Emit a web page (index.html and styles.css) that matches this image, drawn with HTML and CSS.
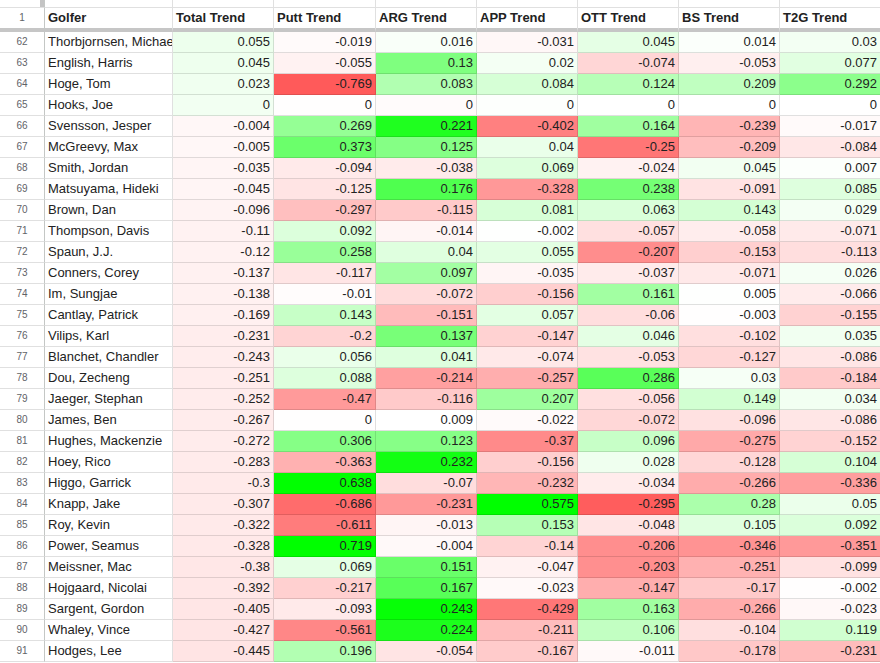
FILE: index.html
```html
<!DOCTYPE html>
<html>
<head>
<meta charset="utf-8">
<title>Golfer Trends</title>
<link rel="stylesheet" href="styles.css">
<script src="script.js" defer></script>
</head>
<body>
<div class="sheet">
  <div class="row top">
    <div class="cell rn"><div class="handle"></div></div>
    <div class="cell"></div><div class="cell"></div><div class="cell"></div><div class="cell"></div>
    <div class="cell"></div><div class="cell"></div><div class="cell"></div><div class="cell"></div>
  </div>
  <div class="row head">
    <div class="cell rn">1</div>
    <div class="cell">Golfer</div>
    <div class="cell">Total Trend</div>
    <div class="cell">Putt Trend</div>
    <div class="cell">ARG Trend</div>
    <div class="cell">APP Trend</div>
    <div class="cell">OTT Trend</div>
    <div class="cell">BS Trend</div>
    <div class="cell">T2G Trend</div>
  </div>
  <div class="row data"><div class="cell rn">62</div><div class="cell">Thorbjornsen, Michael</div><div class="cell num">0.055</div><div class="cell num">-0.019</div><div class="cell num">0.016</div><div class="cell num">-0.031</div><div class="cell num">0.045</div><div class="cell num">0.014</div><div class="cell num">0.03</div></div>
  <div class="row data"><div class="cell rn">63</div><div class="cell">English, Harris</div><div class="cell num">0.045</div><div class="cell num">-0.055</div><div class="cell num">0.13</div><div class="cell num">0.02</div><div class="cell num">-0.074</div><div class="cell num">-0.053</div><div class="cell num">0.077</div></div>
  <div class="row data"><div class="cell rn">64</div><div class="cell">Hoge, Tom</div><div class="cell num">0.023</div><div class="cell num">-0.769</div><div class="cell num">0.083</div><div class="cell num">0.084</div><div class="cell num">0.124</div><div class="cell num">0.209</div><div class="cell num">0.292</div></div>
  <div class="row data"><div class="cell rn">65</div><div class="cell">Hooks, Joe</div><div class="cell num">0</div><div class="cell num">0</div><div class="cell num">0</div><div class="cell num">0</div><div class="cell num">0</div><div class="cell num">0</div><div class="cell num">0</div></div>
  <div class="row data"><div class="cell rn">66</div><div class="cell">Svensson, Jesper</div><div class="cell num">-0.004</div><div class="cell num">0.269</div><div class="cell num">0.221</div><div class="cell num">-0.402</div><div class="cell num">0.164</div><div class="cell num">-0.239</div><div class="cell num">-0.017</div></div>
  <div class="row data"><div class="cell rn">67</div><div class="cell">McGreevy, Max</div><div class="cell num">-0.005</div><div class="cell num">0.373</div><div class="cell num">0.125</div><div class="cell num">0.04</div><div class="cell num">-0.25</div><div class="cell num">-0.209</div><div class="cell num">-0.084</div></div>
  <div class="row data"><div class="cell rn">68</div><div class="cell">Smith, Jordan</div><div class="cell num">-0.035</div><div class="cell num">-0.094</div><div class="cell num">-0.038</div><div class="cell num">0.069</div><div class="cell num">-0.024</div><div class="cell num">0.045</div><div class="cell num">0.007</div></div>
  <div class="row data"><div class="cell rn">69</div><div class="cell">Matsuyama, Hideki</div><div class="cell num">-0.045</div><div class="cell num">-0.125</div><div class="cell num">0.176</div><div class="cell num">-0.328</div><div class="cell num">0.238</div><div class="cell num">-0.091</div><div class="cell num">0.085</div></div>
  <div class="row data"><div class="cell rn">70</div><div class="cell">Brown, Dan</div><div class="cell num">-0.096</div><div class="cell num">-0.297</div><div class="cell num">-0.115</div><div class="cell num">0.081</div><div class="cell num">0.063</div><div class="cell num">0.143</div><div class="cell num">0.029</div></div>
  <div class="row data"><div class="cell rn">71</div><div class="cell">Thompson, Davis</div><div class="cell num">-0.11</div><div class="cell num">0.092</div><div class="cell num">-0.014</div><div class="cell num">-0.002</div><div class="cell num">-0.057</div><div class="cell num">-0.058</div><div class="cell num">-0.071</div></div>
  <div class="row data"><div class="cell rn">72</div><div class="cell">Spaun, J.J.</div><div class="cell num">-0.12</div><div class="cell num">0.258</div><div class="cell num">0.04</div><div class="cell num">0.055</div><div class="cell num">-0.207</div><div class="cell num">-0.153</div><div class="cell num">-0.113</div></div>
  <div class="row data"><div class="cell rn">73</div><div class="cell">Conners, Corey</div><div class="cell num">-0.137</div><div class="cell num">-0.117</div><div class="cell num">0.097</div><div class="cell num">-0.035</div><div class="cell num">-0.037</div><div class="cell num">-0.071</div><div class="cell num">0.026</div></div>
  <div class="row data"><div class="cell rn">74</div><div class="cell">Im, Sungjae</div><div class="cell num">-0.138</div><div class="cell num">-0.01</div><div class="cell num">-0.072</div><div class="cell num">-0.156</div><div class="cell num">0.161</div><div class="cell num">0.005</div><div class="cell num">-0.066</div></div>
  <div class="row data"><div class="cell rn">75</div><div class="cell">Cantlay, Patrick</div><div class="cell num">-0.169</div><div class="cell num">0.143</div><div class="cell num">-0.151</div><div class="cell num">0.057</div><div class="cell num">-0.06</div><div class="cell num">-0.003</div><div class="cell num">-0.155</div></div>
  <div class="row data"><div class="cell rn">76</div><div class="cell">Vilips, Karl</div><div class="cell num">-0.231</div><div class="cell num">-0.2</div><div class="cell num">0.137</div><div class="cell num">-0.147</div><div class="cell num">0.046</div><div class="cell num">-0.102</div><div class="cell num">0.035</div></div>
  <div class="row data"><div class="cell rn">77</div><div class="cell">Blanchet, Chandler</div><div class="cell num">-0.243</div><div class="cell num">0.056</div><div class="cell num">0.041</div><div class="cell num">-0.074</div><div class="cell num">-0.053</div><div class="cell num">-0.127</div><div class="cell num">-0.086</div></div>
  <div class="row data"><div class="cell rn">78</div><div class="cell">Dou, Zecheng</div><div class="cell num">-0.251</div><div class="cell num">0.088</div><div class="cell num">-0.214</div><div class="cell num">-0.257</div><div class="cell num">0.286</div><div class="cell num">0.03</div><div class="cell num">-0.184</div></div>
  <div class="row data"><div class="cell rn">79</div><div class="cell">Jaeger, Stephan</div><div class="cell num">-0.252</div><div class="cell num">-0.47</div><div class="cell num">-0.116</div><div class="cell num">0.207</div><div class="cell num">-0.056</div><div class="cell num">0.149</div><div class="cell num">0.034</div></div>
  <div class="row data"><div class="cell rn">80</div><div class="cell">James, Ben</div><div class="cell num">-0.267</div><div class="cell num">0</div><div class="cell num">0.009</div><div class="cell num">-0.022</div><div class="cell num">-0.072</div><div class="cell num">-0.096</div><div class="cell num">-0.086</div></div>
  <div class="row data"><div class="cell rn">81</div><div class="cell">Hughes, Mackenzie</div><div class="cell num">-0.272</div><div class="cell num">0.306</div><div class="cell num">0.123</div><div class="cell num">-0.37</div><div class="cell num">0.096</div><div class="cell num">-0.275</div><div class="cell num">-0.152</div></div>
  <div class="row data"><div class="cell rn">82</div><div class="cell">Hoey, Rico</div><div class="cell num">-0.283</div><div class="cell num">-0.363</div><div class="cell num">0.232</div><div class="cell num">-0.156</div><div class="cell num">0.028</div><div class="cell num">-0.128</div><div class="cell num">0.104</div></div>
  <div class="row data"><div class="cell rn">83</div><div class="cell">Higgo, Garrick</div><div class="cell num">-0.3</div><div class="cell num">0.638</div><div class="cell num">-0.07</div><div class="cell num">-0.232</div><div class="cell num">-0.034</div><div class="cell num">-0.266</div><div class="cell num">-0.336</div></div>
  <div class="row data"><div class="cell rn">84</div><div class="cell">Knapp, Jake</div><div class="cell num">-0.307</div><div class="cell num">-0.686</div><div class="cell num">-0.231</div><div class="cell num">0.575</div><div class="cell num">-0.295</div><div class="cell num">0.28</div><div class="cell num">0.05</div></div>
  <div class="row data"><div class="cell rn">85</div><div class="cell">Roy, Kevin</div><div class="cell num">-0.322</div><div class="cell num">-0.611</div><div class="cell num">-0.013</div><div class="cell num">0.153</div><div class="cell num">-0.048</div><div class="cell num">0.105</div><div class="cell num">0.092</div></div>
  <div class="row data"><div class="cell rn">86</div><div class="cell">Power, Seamus</div><div class="cell num">-0.328</div><div class="cell num">0.719</div><div class="cell num">-0.004</div><div class="cell num">-0.14</div><div class="cell num">-0.206</div><div class="cell num">-0.346</div><div class="cell num">-0.351</div></div>
  <div class="row data"><div class="cell rn">87</div><div class="cell">Meissner, Mac</div><div class="cell num">-0.38</div><div class="cell num">0.069</div><div class="cell num">0.151</div><div class="cell num">-0.047</div><div class="cell num">-0.203</div><div class="cell num">-0.251</div><div class="cell num">-0.099</div></div>
  <div class="row data"><div class="cell rn">88</div><div class="cell">Hojgaard, Nicolai</div><div class="cell num">-0.392</div><div class="cell num">-0.217</div><div class="cell num">0.167</div><div class="cell num">-0.023</div><div class="cell num">-0.147</div><div class="cell num">-0.17</div><div class="cell num">-0.002</div></div>
  <div class="row data"><div class="cell rn">89</div><div class="cell">Sargent, Gordon</div><div class="cell num">-0.405</div><div class="cell num">-0.093</div><div class="cell num">0.243</div><div class="cell num">-0.429</div><div class="cell num">0.163</div><div class="cell num">-0.266</div><div class="cell num">-0.023</div></div>
  <div class="row data"><div class="cell rn">90</div><div class="cell">Whaley, Vince</div><div class="cell num">-0.427</div><div class="cell num">-0.561</div><div class="cell num">0.224</div><div class="cell num">-0.211</div><div class="cell num">0.106</div><div class="cell num">-0.104</div><div class="cell num">0.119</div></div>
  <div class="row data"><div class="cell rn">91</div><div class="cell">Hodges, Lee</div><div class="cell num">-0.445</div><div class="cell num">0.196</div><div class="cell num">-0.054</div><div class="cell num">-0.167</div><div class="cell num">-0.011</div><div class="cell num">-0.178</div><div class="cell num">-0.231</div></div>
</div>
</body>
</html>
```
FILE: styles.css
```css
html, body {
  margin: 0;
  padding: 0;
  background: #ffffff;
  overflow: hidden;
}
body {
  font-family: "Liberation Sans", Arial, sans-serif;
  color: #222222;
}
.sheet {
  width: 881px;
}
.row {
  display: grid;
  grid-template-columns: 45px 128px 101px 102px 101px 101px 101px 101px 101px;
}
.cell {
  box-sizing: border-box;
  height: 21px;
  padding: 0 3px;
  border-right: 1px solid rgba(0, 0, 0, 0.12);
  border-bottom: 1px solid rgba(0, 0, 0, 0.12);
  font-size: 13px;
  line-height: 20px;
  white-space: nowrap;
  overflow: hidden;
}
.num {
  text-align: right;
}
.rn {
  font-size: 10px;
  color: #5f6368;
  text-align: center;
  border-right-color: #c4c7c5;
}
.top .cell {
  height: 8px;
  padding: 0;
}
.top .rn {
  display: flex;
  justify-content: flex-end;
}
.handle {
  width: 4px;
  height: 7px;
  background: #c4c4c4;
}
.head .cell {
  height: 24px;
  font-weight: bold;
  border-bottom: 4px solid #c6c6c6;
}
.head .rn {
  font-weight: normal;
}
```
FILE: script.js
```js
(function () {
  var scales = [
    { mid: -0.002, neg: -4.0, pos: 3.0, minT: 0.05 },
    { mid: 0.004, neg: -0.77, pos: 0.64, minT: 0 },
    { mid: 0.01, neg: -0.38, pos: 0.25, minT: 0 },
    { mid: -0.005, neg: -0.52, pos: 0.55, minT: 0 },
    { mid: 0, neg: -0.3, pos: 0.44, minT: 0 },
    { mid: 0, neg: -0.53, pos: 0.85, minT: 0 },
    { mid: 0, neg: -0.57, pos: 0.65, minT: 0 }
  ];
  var rows = document.querySelectorAll('.row.data');
  rows.forEach(function (row) {
    var cells = row.querySelectorAll('.num');
    cells.forEach(function (cell, i) {
      var s = scales[i];
      var v = parseFloat(cell.textContent);
      var r, g, b, t;
      if (v === s.mid) { return; }
      if (v > s.mid) {
        t = Math.min(1, (v - s.mid) / (s.pos - s.mid) + s.minT);
        r = Math.round(255 - 255 * t); g = 255; b = r;
      } else {
        t = Math.min(1, (s.mid - v) / (s.mid - s.neg) + s.minT);
        r = 255; g = Math.round(255 - 165 * t); b = g;
      }
      cell.style.backgroundColor = 'rgb(' + r + ',' + g + ',' + b + ')';
    });
  });
})();
```
